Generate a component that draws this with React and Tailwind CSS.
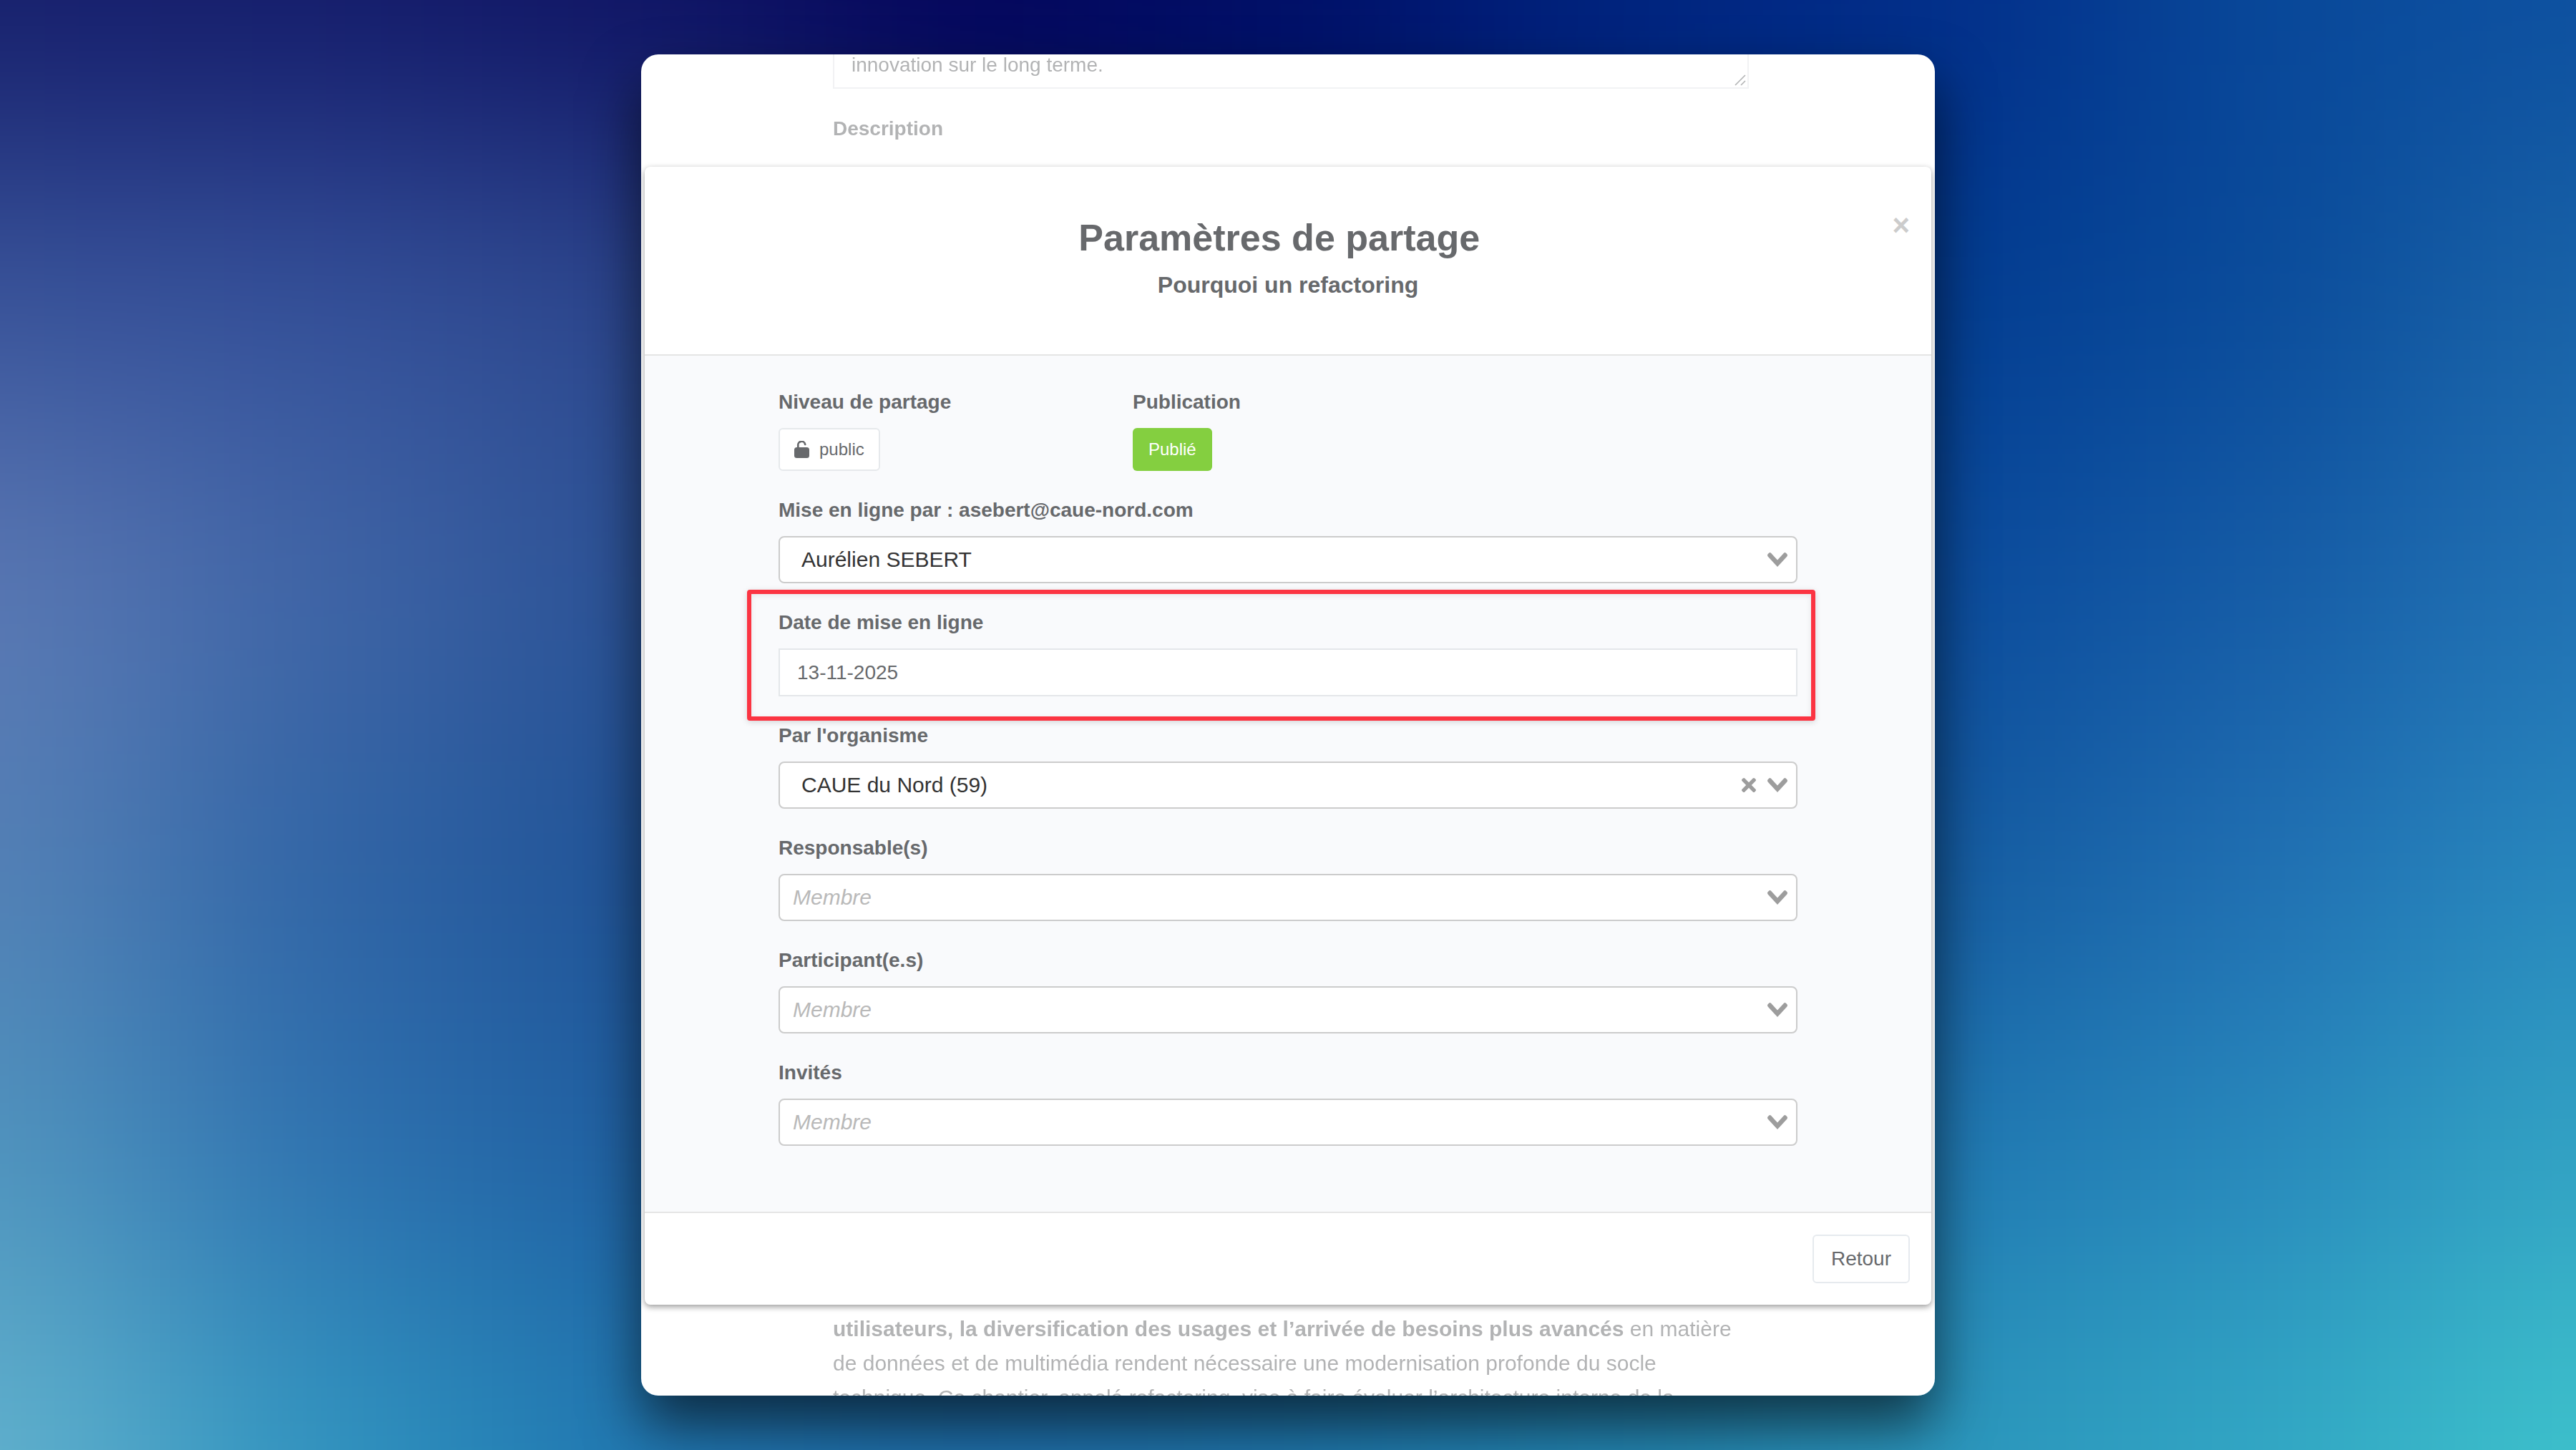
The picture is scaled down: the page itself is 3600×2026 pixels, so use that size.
import { useState } from 'react'

// Wallpaper colours, one row per horizontal band, blurred together into a mesh
const WALLPAPER = [
  ['#151d6a', '#131a69', '#0e1262', '#03035a', '#000e66', '#00237e', '#022c88', '#084799', '#0d50a0'],
  ['#38539a', '#35519a', '#2e488e', '#12246e', '#041a70', '#022a80', '#023c90', '#094a9a', '#1a64a8'],
  ['#5c79b4', '#4166a7', '#2c5296', '#1b4488', '#123c86', '#0a3e90', '#0a4a9c', '#155ba6', '#2272b4'],
  ['#5481b6', '#3064a5', '#1f5296', '#184c90', '#164c90', '#145096', '#145a9f', '#206eb2', '#2888be'],
  ['#5095be', '#2f72b0', '#1f60a2', '#1b5a9a', '#1b609c', '#1c66a2', '#2078b2', '#2888bc', '#33a4c4'],
  ['#63b3ce', '#3096c0', '#2079b2', '#1f70aa', '#1f78ac', '#2488b2', '#2c98bc', '#32a8c4', '#3ec4cc'],
]

function Wallpaper() {
  return (
    <svg
      className="absolute inset-0 h-full w-full"
      viewBox="0 0 3600 2026"
      preserveAspectRatio="none"
      aria-hidden="true"
    >
      <filter
        id="mesh"
        filterUnits="userSpaceOnUse"
        x="-700"
        y="-700"
        width="5000"
        height="3426"
        colorInterpolationFilters="sRGB"
      >
        <feGaussianBlur stdDeviation="170" />
      </filter>
      <g filter="url(#mesh)">
        {WALLPAPER.map((row, r) =>
          row.map((fill, c) => {
            const left = c === 0 ? -700 : c * 450 - 225
            const right = c === 8 ? 4300 : c * 450 + 227
            const top = r === 0 ? -700 : r * 405 - 203
            const bottom = r === 5 ? 2726 : r * 405 + 204
            return (
              <rect
                key={`${r}-${c}`}
                x={left}
                y={top}
                width={right - left}
                height={bottom - top}
                fill={fill}
              />
            )
          })
        )}
      </g>
    </svg>
  )
}

function ChevronIcon() {
  return (
    <svg className="pointer-events-none h-5 w-7 shrink-0" viewBox="0 0 14 10" fill="#9d9d9d" aria-hidden="true">
      <path d="M9.211364 7.59931l4.48338-4.867229c.407008-.441854.407008-1.158247 0-1.60046l-.73712-.80023c-.407008-.441854-1.066904-.441854-1.474243 0L7 5.198617 2.51662.33139c-.407008-.441853-1.066904-.441853-1.474243 0l-.737121.80023c-.407008.441854-.407008 1.158248 0 1.600461l4.48338 4.867228L7 10l2.211364-2.40069z" />
    </svg>
  )
}

function ClearIcon() {
  return (
    <svg className="h-5 w-5" viewBox="0 0 10 10" fill="#9d9d9d" aria-hidden="true">
      <path d="M6.895455 5l2.842897-2.842898c.348864-.348863.348864-.914488 0-1.263636L9.106534.261648c-.348864-.348864-.914489-.348864-1.263636 0L5 3.104545 2.157102.261648c-.348863-.348864-.914488-.348864-1.263636 0L.261648.893466c-.348864.348864-.348864.914489 0 1.263636L3.104545 5 .261648 7.842898c-.348864.348863-.348864.914488 0 1.263636l.631818.631818c.348864.348864.914773.348864 1.263636 0L5 6.895455l2.842898 2.842897c.348863.348864.914772.348864 1.263636 0l.631818-.631818c.348864-.348864.348864-.914489 0-1.263636L6.895455 5z" />
    </svg>
  )
}

function UnlockIcon() {
  return (
    <svg className="h-6 w-[21px]" viewBox="0 0 21 24" aria-hidden="true">
      <rect x="0" y="9" width="21" height="15" rx="3.5" fill="#67696c" />
      <path
        d="M5.3 10V6.4A5 5 0 0 1 15.2 5"
        fill="none"
        stroke="#67696c"
        strokeWidth="2.7"
        strokeLinecap="round"
      />
    </svg>
  )
}

function SelectField({ id, label, options, placeholder, clearable }) {
  const [value, setValue] = useState(placeholder ? '' : options[0])

  return (
    <div>
      <label htmlFor={id} className="mb-4 block text-[28px] leading-10 font-bold">
        {label}
      </label>
      <div className="flex h-[66px] items-center gap-4 rounded-lg border-2 border-[#cccccc] bg-white pr-3">
        <select
          id={id}
          value={value}
          onChange={(e) => setValue(e.target.value)}
          className={`h-full min-w-0 flex-1 appearance-none bg-transparent pb-0.5 text-[30px] outline-none ${
            value ? 'pl-[30px] text-[#333333]' : 'pl-[18px] text-[#b9b9b9] italic'
          }`}
        >
          {placeholder && <option value="">{placeholder}</option>}
          {options.map((option) => (
            <option key={option}>{option}</option>
          ))}
        </select>
        {clearable && (
          <button type="button" aria-label="Effacer" onClick={() => setValue('')}>
            <ClearIcon />
          </button>
        )}
        <ChevronIcon />
      </div>
    </div>
  )
}

function ShareModal() {
  const [date, setDate] = useState('13-11-2025')

  return (
    <section
      role="dialog"
      aria-labelledby="share-title"
      className="relative mx-[5px] shrink-0 rounded-lg bg-white shadow-[0_3px_8px_rgba(0,0,0,0.4)]"
    >
      <header className="border-b-2 border-[#e5e5e5] px-[30px] pt-[61px] pb-[77px]">
        <div className="flex items-start">
          <h2 id="share-title" className="flex-1 pt-2 text-center text-[52px] leading-[60px] font-bold">
            Paramètres de partage
          </h2>
          <button type="button" aria-label="Fermer" className="text-[42px] leading-[42px] font-bold text-[#cccccc]">
            ×
          </button>
        </div>
        <p className="mt-4 text-center text-[32px] leading-10 font-bold">Pourquoi un refactoring</p>
      </header>

      <div className="bg-[#f9fafc] px-12 pt-[45px] pb-[92px]">
        <form className="mx-auto flex max-w-[1424px] flex-col gap-[35px]">
          <div className="flex">
            <div className="w-[495px]">
              <div className="mb-4 text-[28px] leading-10 font-bold">Niveau de partage</div>
              <button
                type="button"
                className="flex h-[60px] items-center gap-3.5 rounded-md border-2 border-[#e6e9ec] bg-white px-5 text-2xl"
              >
                <UnlockIcon />
                public
              </button>
            </div>
            <div>
              <div className="mb-4 text-[28px] leading-10 font-bold">Publication</div>
              <button type="button" className="h-[60px] rounded-md bg-[#84cf40] px-[22px] text-2xl text-white">
                Publié
              </button>
            </div>
          </div>

          <SelectField
            id="author"
            label="Mise en ligne par : asebert@caue-nord.com"
            options={['Aurélien SEBERT']}
          />

          <div className="relative">
            <label htmlFor="date" className="mb-4 block text-[28px] leading-10 font-bold">
              Date de mise en ligne
            </label>
            <input
              id="date"
              type="text"
              value={date}
              onChange={(e) => setDate(e.target.value)}
              className="block h-[67px] w-full border-2 border-[#e4e7ea] bg-white px-6 text-[28px] outline-none"
            />
            {/* Highlight frame around the date field */}
            <div className="pointer-events-none absolute -top-[26px] -right-[25px] -bottom-[34px] -left-11 rounded-sm border-[6px] border-[#fb3442] shadow-[0_2px_8px_rgba(0,0,0,0.15),inset_0_2px_8px_rgba(0,0,0,0.08)]" />
          </div>

          <SelectField id="organisation" label="Par l'organisme" options={['CAUE du Nord (59)']} clearable />
          <SelectField id="owners" label="Responsable(s)" options={[]} placeholder="Membre" />
          <SelectField id="participants" label="Participant(e.s)" options={[]} placeholder="Membre" />
          <SelectField id="guests" label="Invités" options={[]} placeholder="Membre" />
        </form>
      </div>

      <footer className="flex justify-end border-t-2 border-[#e5e5e5] p-[30px]">
        <button type="button" className="h-[68px] rounded-md border-2 border-[#e6eaee] bg-white px-6 text-[28px]">
          Retour
        </button>
      </footer>
    </section>
  )
}

function App() {
  return (
    <div className="relative h-screen overflow-hidden p-[76px] font-['Liberation_Sans',Arial,sans-serif] text-[#67696c]">
      <Wallpaper />
      <main className="relative mx-auto h-full max-w-[1808px] rounded-3xl shadow-[0_40px_80px_rgba(0,0,0,0.62)]">
        <div className="flex h-full flex-col overflow-hidden rounded-3xl bg-white">
          <div className="flex h-[157px] shrink-0 flex-col justify-end pl-2 opacity-50">
            <div className="mx-auto w-full max-w-[1280px] pb-[33px]">
              <div className="relative">
                <textarea
                  aria-labelledby="description"
                  rows="1"
                  defaultValue="innovation sur le long terme."
                  className="block h-[68px] w-full resize-none overflow-hidden border-2 border-[#e4e7ea] px-6 pt-[13px] pb-[11px] text-[28px] leading-10"
                />
                <svg
                  className="absolute right-1 bottom-1 h-4 w-4"
                  viewBox="0 0 16 16"
                  stroke="#67696c"
                  strokeWidth="1.6"
                  aria-hidden="true"
                >
                  <path d="M1 15L15 1M9 15L15 9" />
                </svg>
              </div>
              <div id="description" className="mt-9 text-[28px] leading-10 font-bold">
                Description
              </div>
            </div>
          </div>

          <ShareModal />

          <div className="pt-2.5 pl-2 opacity-50">
            <p className="mx-auto max-w-[1280px] text-[30px] leading-[48px]">
              <strong>
                utilisateurs, la diversification des usages et l’arrivée de besoins plus avancés
              </strong>{' '}
              en matière de données et de multimédia rendent nécessaire une modernisation profonde du socle
              technique. Ce chantier, appelé refactoring, vise à faire évoluer l’architecture interne de la
            </p>
          </div>
        </div>
      </main>
    </div>
  )
}

export default App
